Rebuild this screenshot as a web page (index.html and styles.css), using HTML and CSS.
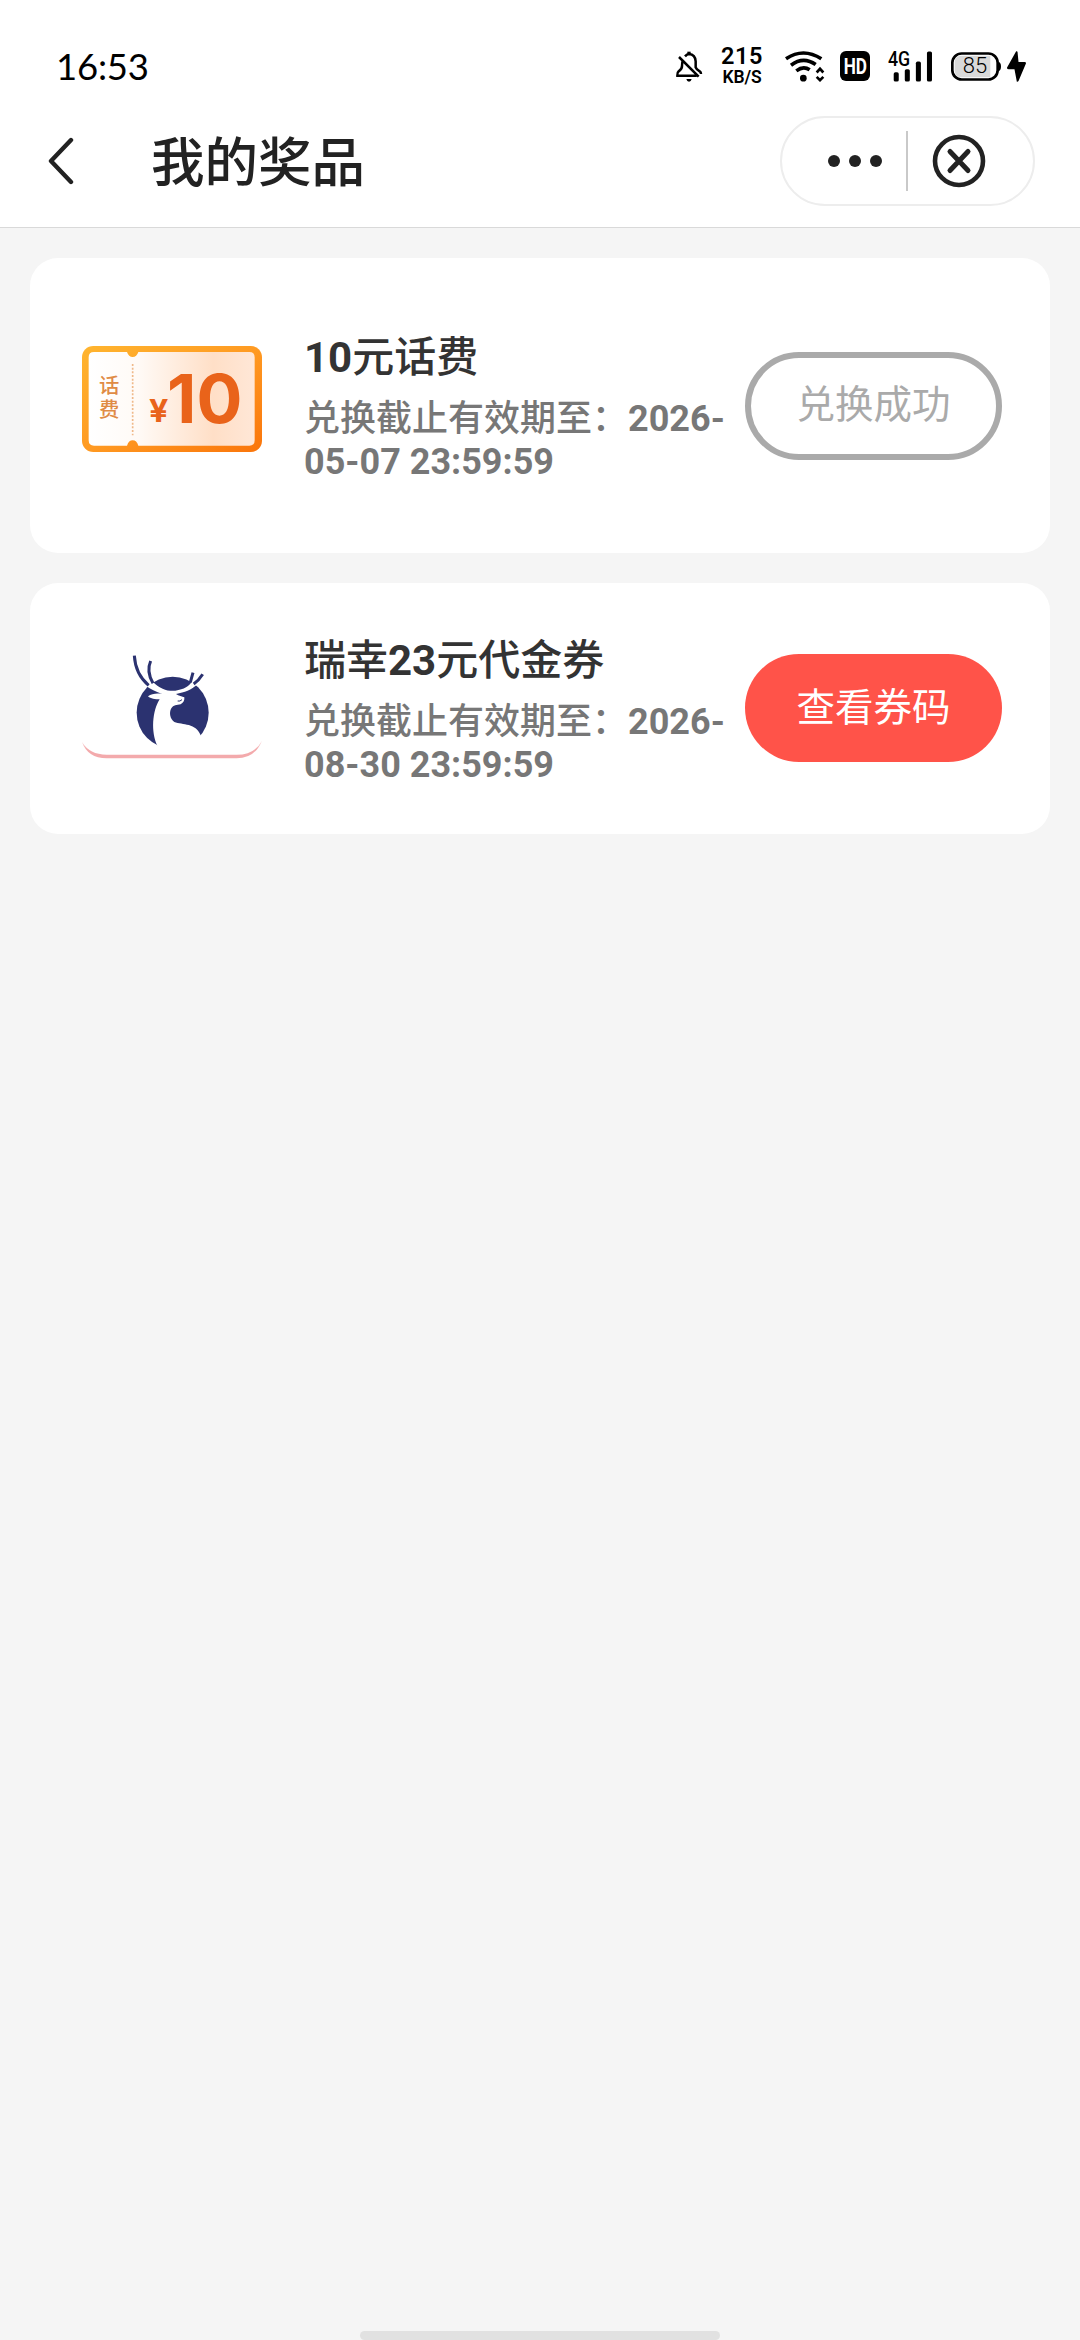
FILE: index.html
```html
<!DOCTYPE html>
<html lang="zh-CN">
<head>
<meta charset="utf-8">
<title>我的奖品</title>
<link rel="stylesheet" href="styles.css">
</head>
<body>
<div class="screen">
  <header class="header">
    <div class="status">
      <span class="clock">16:53</span>
      <div class="status-icons">
        <svg class="bell" viewBox="0 0 78 96" width="26" height="32" fill="none" stroke="#000" stroke-width="7.500">
          <path d="M27 19Q33 12 39 12Q58 14 59 34V52Q61 58 71 64Q75 67 75 72"/>
          <path d="M21 30Q18 36 18 48Q18 58 8 64Q3 68 4 77H62M9 21L68 80"/>
          <path d="M39 5V14" stroke-width="10"/>
          <path d="M31 87H47Q45 95 39 95Q33 95 31 87Z" fill="#000" stroke="none"/>
        </svg>
        <div class="speed"><span class="speed-value">215</span><span class="speed-unit">KB/S</span></div>
        <svg class="wifi" viewBox="0 0 120 92" width="40" height="31" fill="none" stroke="#000" stroke-width="11">
          <path d="M3 23Q55 -12 109 23M18 42Q55 14 92 40M34 59Q55 43 74 56"/>
          <circle cx="55" cy="81" r="10" fill="#000" stroke="none"/>
          <path d="M95 64L105 53L115 64M95 77L105 87L115 77" stroke-width="8"/>
        </svg>
        <svg class="hd" viewBox="0 0 90 90" width="30" height="30"><rect width="90" height="90" rx="18"/><text class="hd-text" x="11" y="68" textLength="70" lengthAdjust="spacingAndGlyphs">HD</text></svg>
        <svg class="signal" viewBox="0 0 134 92" width="45" height="31">
          <text class="signal-text" x="0" y="45" textLength="66" lengthAdjust="spacingAndGlyphs">4G</text>
          <rect x="17" y="63" width="15" height="28" rx="5"/><rect x="50" y="54" width="15" height="37" rx="5"/><rect x="83" y="31" width="15" height="60" rx="5"/><rect x="116" y="1" width="15" height="90" rx="5"/>
        </svg>
        <svg class="battery" viewBox="0 0 150 86" width="50" height="29">
          <rect x="4" y="4" width="136" height="78" rx="28" fill="#fff" stroke="#000" stroke-width="8"/>
          <path d="M32 11H118V75H32Q11 75 11 54V32Q11 11 32 11Z" fill="#d9d9d9"/>
          <path d="M143 29Q150 32 150 43Q150 54 143 57Z"/>
          <text class="battery-text" x="72" y="63" text-anchor="middle">85</text>
        </svg>
        <svg class="bolt" viewBox="0 0 56 92" width="19" height="31"><path d="M27 1L0 49Q-1 54 5 54H22L29 91Q32 92 34 89L56 37Q57 33 52 33H34L31 2Q29 0 27 1Z"/></svg>
      </div>
    </div>
    <nav class="nav">
      <svg class="back" viewBox="0 0 26 48" width="26" height="48" fill="none" stroke="#222" stroke-width="4.4" stroke-linecap="round" stroke-linejoin="round"><path d="M23 3L3 24L23 45"/></svg>
      <h1 class="nav-title">我的奖品</h1>
      <div class="capsule">
        <svg class="dots" viewBox="0 0 54 12" width="54" height="12" fill="#222"><circle cx="6" cy="6" r="6"/><circle cx="27" cy="6" r="6"/><circle cx="48" cy="6" r="6"/></svg>
        <i class="divider"></i>
        <svg class="close" viewBox="0 0 54 54" width="54" height="54" fill="none" stroke="#222"><circle cx="27" cy="27" r="24" stroke-width="4.6"/><path d="M18 17.500L36 36.500M36 17.500L18 36.500" stroke-width="5" stroke-linecap="round"/></svg>
      </div>
    </nav>
  </header>
  <main class="list">
    <section class="card card-tall">
      <svg class="thumb thumb-ticket" viewBox="66 78 540 318" width="180" height="106">
        <defs>
          <linearGradient id="edge" x1="0" y1="0" x2="1" y2="1"><stop offset="0" stop-color="#ffb52f"/><stop offset=".5" stop-color="#ff9a22"/><stop offset="1" stop-color="#fa750b"/></linearGradient>
          <linearGradient id="paper" x1="0" y1="0" x2="1" y2="0"><stop offset="0" stop-color="#fff"/><stop offset=".3" stop-color="#fffaf6"/><stop offset=".75" stop-color="#ffdfc7"/><stop offset="1" stop-color="#ffe7d7"/></linearGradient>
        </defs>
        <rect x="66" y="78" width="540" height="318" rx="34" fill="url(#edge)"/>
        <path d="M102 96H201Q206 111 218 111Q230 111 235 96H568Q584 96 584 112V361Q584 377 568 377H235Q230 361 218 361Q206 361 201 377H102Q86 377 86 361V112Q86 96 102 96Z" fill="url(#paper)"/>
        <path d="M218 132V346" stroke="#efb98a" stroke-width="5" stroke-dasharray="6 5"/>
        <text class="ticket-label" x="117" y="219">话</text>
        <text class="ticket-label" x="117" y="291">费</text>
        <text class="ticket-yen" x="267" y="307" textLength="58" lengthAdjust="spacingAndGlyphs">¥</text>
        <text class="ticket-amount" x="321" y="310" textLength="226" lengthAdjust="spacingAndGlyphs">10</text>
      </svg>
      <div class="info">
        <h2 class="prize"><b>10</b>元话费</h2>
        <p class="expiry">兑换截止有效期至：<b>2026-05-07 23:59:59</b></p>
      </div>
      <button class="btn btn-done">兑换成功</button>
    </section>
    <section class="card">
      <svg class="thumb thumb-deer" viewBox="66 72 540 318" width="180" height="106">
        <defs><linearGradient id="rim" x1="0" y1="0" x2="0" y2="1"><stop offset="0" stop-color="#f3aaac" stop-opacity=".5"/><stop offset=".5" stop-color="#f3aaac"/></linearGradient></defs>
        <circle cx="338" cy="248" r="108" fill="#2b3270"/>
        <path d="M292 347C272 306 277 242 299 208C286 208 272 207 264 199C275 191 291 189 307 192C289 186 270 178 256 166L278 155C301 178 323 184 346 182C372 179 389 168 396 154L412 163C394 181 374 187 348 192C356 198 367 199 373 202C374 211 371 218 362 223C350 225 340 225 334 235C326 249 331 268 343 276C367 285 409 278 423 318L440 350L340 380Z" fill="#fff"/>
        <path d="M353 213Q360 215 366 209" fill="none" stroke="#2b3270" stroke-width="3"/>
        <path d="M223 77C225 111 237 142 266 166M272 93C263 113 267 139 279 160M399 128L391 157M428 133Q417 151 401 162" fill="none" stroke="#2b3270" stroke-width="9"/>
        <path d="M66 336Q89 374 140 374H530Q584 374 606 332Q585 385 530 385H140Q83 384 66 336Z" fill="url(#rim)"/>
      </svg>
      <div class="info">
        <h2 class="prize">瑞幸<b>23</b>元代金券</h2>
        <p class="expiry">兑换截止有效期至：<b>2026-08-30 23:59:59</b></p>
      </div>
      <button class="btn btn-view">查看券码</button>
    </section>
  </main>
  <footer class="home"><i class="home-bar"></i></footer>
</div>
</body>
</html>
```
FILE: styles.css
```css
* { box-sizing: border-box; }
body, h1, h2, p { margin: 0; }
body { background: #f5f5f5; font-family: Roboto, "Noto Sans CJK SC", sans-serif; }
.screen { display: flex; flex-direction: column; width: 1080px; height: 2340px; }

.header { height: 228px; background: #fff; border-bottom: 1px solid #d9d9d9; }
.status { display: flex; justify-content: space-between; align-items: center; height: 96px; padding: 36px 54px 0 56px; }
.clock { font: 400 36.500px/44px Lato, sans-serif; letter-spacing: -.2px; color: #000; }
.status-icons { display: flex; align-items: center; color: #000; }
.bell { overflow: visible; }
.speed { display: flex; flex-direction: column; align-items: center; width: 42px; margin-left: 19px; padding-top: 1px; font-weight: 600; }
.speed-value { font-size: 23.500px; line-height: 21px; letter-spacing: .5px; }
.speed-unit { font-size: 17.500px; line-height: 20px; letter-spacing: -.1px; }
.wifi { margin-left: 22px; }
.hd { margin-left: 15px; }
.hd-text { font: 700 64px Roboto; fill: #fff; }
.signal { margin-left: 18px; overflow: visible; }
.signal-text { font: 500 58px Roboto; }
.battery { margin-left: 18px; }
.battery-text { font: 300 66px Roboto; }
.bolt { margin-left: 6px; }

.nav { display: flex; align-items: center; height: 131px; padding: 0 45px 1px 48px; }
.nav-title { flex: 1; margin-left: 77px; padding-top: 6px; font-size: 53.500px; line-height: 70px; font-weight: 500; color: #222; }
.capsule { display: flex; align-items: center; width: 255px; height: 90px; border: 2px solid #ededed; border-radius: 45px; }
.dots { margin-left: 46px; }
.divider { width: 2px; height: 60px; margin-left: 24px; background: #c9c9c9; }
.close { margin-left: 24px; }

.list { display: flex; flex-direction: column; gap: 30px; padding: 30px; }
.card { display: flex; align-items: center; height: 251px; padding: 0 48px 0 52px; border-radius: 28px; background: #fff; }
.card-tall { height: 295px; }
.thumb { flex: none; }
.thumb-deer { margin-bottom: 3px; }
.thumb-ticket { margin-bottom: 13px; }
.info { width: 440px; margin-left: 42px; padding-top: 5px; }
.prize { margin-bottom: 15px; font-size: 42px; line-height: 50px; font-weight: 500; color: #333; }
.expiry { font-size: 36px; line-height: 43px; font-weight: 500; color: #777; }
.prize b, .expiry b { font-weight: 700; }
.btn { width: 257px; height: 108px; margin-left: auto; padding: 0; border: 0; border-radius: 54px; font: 400 38.500px/1 Roboto, "Noto Sans CJK SC", sans-serif; }
.btn-done { border: 6px solid #aaa; background: #fff; color: #aaa; }
.btn-view { margin-bottom: 1px; background: #ff5349; color: #fff; }

.ticket-label { font: 500 61px "Noto Sans CJK SC"; fill: #df8b45; }
.ticket-yen { font: 700 92px Inter; fill: #e9631a; }
.ticket-amount { font: 700 202px Inter; fill: #e9631a; }

.home { display: flex; justify-content: center; margin-top: auto; }
.home-bar { width: 360px; height: 9px; border-radius: 5px; background: #e1e1e1; }
```
